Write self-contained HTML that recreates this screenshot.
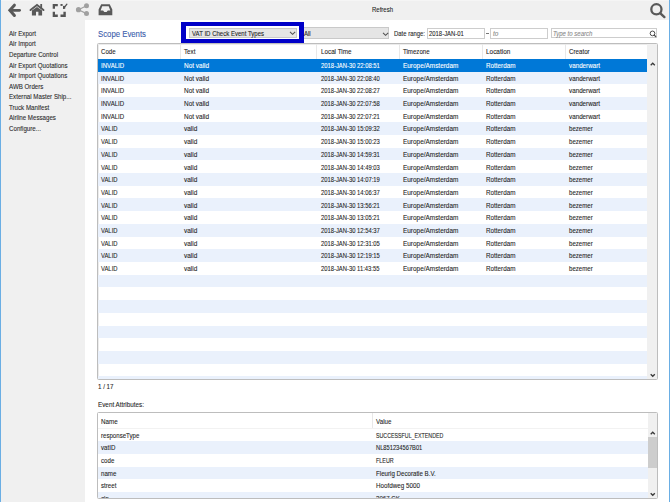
<!DOCTYPE html>
<html><head><meta charset="utf-8"><style>
*{box-sizing:border-box;margin:0;padding:0}
html,body{width:670px;height:502px;overflow:hidden;background:#f0f0f0;font-family:"Liberation Sans",sans-serif;color:#1f1f1f}
.a{position:absolute}
.t{position:absolute;white-space:nowrap;line-height:1.117;transform-origin:0 0;-webkit-text-stroke:0.1px currentColor}
</style></head><body>
<div class="a" style="left:0;top:0;width:1px;height:502px;background:#6aaee4"></div>
<div class="a" style="left:669px;top:0;width:1px;height:502px;background:#6aaee4"></div>
<div class="a" style="left:85px;top:20px;width:584px;height:482px;background:#fff"></div>
<div class="a" style="left:1px;top:0;width:668px;height:1px;background:#f5f5f5"></div>
<svg class="a" style="left:0;top:0" width="670" height="20" viewBox="0 0 670 20">
  <g fill="none" stroke="#595959" stroke-width="3" stroke-linecap="round" stroke-linejoin="miter">
    <path d="M14.4 5.2 L9.85 10.3 L14.4 15.5"/>
    <path d="M11 10.3 H19.6" stroke-width="2.8"/>
  </g>
  <g fill="#595959">
    <path d="M30.5 10.1 L37 4.9 L43.5 10.1" fill="none" stroke="#595959" stroke-width="1.9" stroke-linejoin="miter" stroke-linecap="round"/>
    <rect x="40.3" y="4" width="1.8" height="4.2"/>
    <path d="M31.9 10.6 L37 6.9 L42.1 10.6 V15.5 H38.4 V11.8 H36 V15.5 H31.9 Z"/>
  </g>
  <g fill="#555">
    <path d="M52.7 4 H57.8 V6.2 H55 V8.8 H52.7 Z"/>
    <path d="M52.7 11.8 H55 V14.6 H57.8 V16.9 H52.7 Z"/>
    <path d="M60.5 14.6 H63.4 V11.8 H65.8 V16.9 H60.5 Z"/>
    <path d="M60.5 4 H62.6 V5.9 H60.5 Z"/>
    <path d="M63 5.9 H65.2 V8.8 H63 Z"/>
    <path d="M63.6 8.4 L66.9 4.2" stroke="#555" stroke-width="1.3" stroke-linecap="round"/>
  </g>
  <g fill="#a0a0a0" stroke="#a0a0a0">
    <circle cx="78.5" cy="9.7" r="2.6" stroke="none"/>
    <circle cx="86.5" cy="5.8" r="2.5" stroke="none"/>
    <circle cx="86.5" cy="13.6" r="2.5" stroke="none"/>
    <path d="M78.5 9.7 L86.5 5.8 M78.5 9.7 L86.5 13.6" stroke-width="1.2" fill="none"/>
  </g>
  <g fill="#595959">
    <path d="M101.2 4.3 H109.7 L112.3 9.6 V15.3 H98.6 V9.6 Z M102.2 6.3 L100.6 10.6 H103.1 L104.3 12 H106.6 L107.8 10.6 H110.3 L108.7 6.3 Z" fill-rule="evenodd"/>
  </g>
  <g fill="none" stroke="#595959" stroke-width="2.3">
    <circle cx="656.4" cy="9.3" r="5.1"/>
    <path d="M660.4 13.3 L664.4 17.1" stroke-linecap="round" stroke-width="2.4"/>
  </g>
</svg>

<div class="t" style="left:372.00px;top:6.09px;font-size:7.3px;transform:scaleX(0.821);">Refresh</div>
<div class="t" style="left:9.00px;top:29.89px;font-size:7.3px;transform:scaleX(0.845);color:#2b2b2b;">Air Export</div>
<div class="t" style="left:9.00px;top:40.45px;font-size:7.3px;transform:scaleX(0.845);color:#2b2b2b;">Air Import</div>
<div class="t" style="left:9.00px;top:51.01px;font-size:7.3px;transform:scaleX(0.845);color:#2b2b2b;">Departure Control</div>
<div class="t" style="left:9.00px;top:61.57px;font-size:7.3px;transform:scaleX(0.845);color:#2b2b2b;">Air Export Quotations</div>
<div class="t" style="left:9.00px;top:72.13px;font-size:7.3px;transform:scaleX(0.845);color:#2b2b2b;">Air Import Quotations</div>
<div class="t" style="left:9.00px;top:82.69px;font-size:7.3px;transform:scaleX(0.845);color:#2b2b2b;">AWB Orders</div>
<div class="t" style="left:9.00px;top:93.25px;font-size:7.3px;transform:scaleX(0.845);color:#2b2b2b;">External Master Ship...</div>
<div class="t" style="left:9.00px;top:103.81px;font-size:7.3px;transform:scaleX(0.845);color:#2b2b2b;">Truck Manifest</div>
<div class="t" style="left:9.00px;top:114.37px;font-size:7.3px;transform:scaleX(0.845);color:#2b2b2b;">Airline Messages</div>
<div class="t" style="left:9.00px;top:124.93px;font-size:7.3px;transform:scaleX(0.845);color:#2b2b2b;">Configure...</div>
<div class="t" style="left:97.80px;top:30.44px;font-size:8.8px;transform:scaleX(0.884);color:#3b5cab;">Scope Events</div>
<div class="a" style="left:181px;top:22px;width:122.6px;height:21.3px;background:#0000c8"></div>
<div class="a" style="left:185.6px;top:26.2px;width:113.5px;height:12.6px;background:#fff"></div>
<div class="a" style="left:189.3px;top:27.8px;width:108px;height:10.3px;background:#e5e5e5;border:1px solid #c9c9c9"></div>
<div class="t" style="left:191.60px;top:29.89px;font-size:7.3px;transform:scaleX(0.828);">VAT ID Check Event Types</div>
<svg class="a" style="left:288px;top:29px" width="9" height="8" viewBox="0 0 9 8"><path d="M2 2.8 L4.6 5.3 L7.2 2.8" fill="none" stroke="#505050" stroke-width="1.05"/></svg>
<div class="a" style="left:303.6px;top:27.4px;width:85.7px;height:11.6px;background:#e5e5e5;border:1px solid #c9c9c9;border-left:none"></div>
<div class="t" style="left:303.80px;top:29.99px;font-size:7.3px;transform:scaleX(0.825);">All</div>
<svg class="a" style="left:380.5px;top:29.5px" width="9" height="8" viewBox="0 0 9 8"><path d="M2 2.8 L4.6 5.3 L7.2 2.8" fill="none" stroke="#505050" stroke-width="1.05"/></svg>
<div class="t" style="left:393.60px;top:29.69px;font-size:7.3px;transform:scaleX(0.812);">Date range:</div>
<div class="a" style="left:427.3px;top:27.5px;width:57.3px;height:11.3px;background:#fff;border:1px solid #cdcdcd"></div>
<div class="t" style="left:429.10px;top:29.69px;font-size:7.3px;transform:scaleX(0.811);">2018-JAN-01</div>
<div class="a" style="left:486.2px;top:32.8px;width:2.8px;height:1px;background:#777"></div>
<div class="a" style="left:490.4px;top:27.5px;width:57.3px;height:11.3px;background:#fff;border:1px solid #cdcdcd"></div>
<div class="t" style="left:492.50px;top:29.69px;font-size:7.3px;transform:scaleX(0.887);color:#8a8a8a;font-style:italic;">to</div>
<div class="a" style="left:551.3px;top:27.8px;width:105.6px;height:10.7px;background:#fff;border:1px solid #cdcdcd"></div>
<div class="t" style="left:553.00px;top:29.69px;font-size:7.3px;transform:scaleX(0.825);color:#8a8a8a;font-style:italic;">Type to search</div>
<svg class="a" style="left:648px;top:29px" width="10" height="10" viewBox="0 0 10 10"><circle cx="4.5" cy="4.4" r="2.35" fill="none" stroke="#4a4a4a" stroke-width="1"/><path d="M6.2 6.1 L7.7 7.5" stroke="#4a4a4a" stroke-width="1.2" stroke-linecap="round"/></svg>
<div class="a" style="left:97px;top:43.3px;width:561px;height:336.5px;border:1px solid #bdbdbd;border-radius:1.5px;box-shadow:inset 1px 1px 0 #ececec, inset -1px -1px 0 #ececec;background:#fff"></div>
<div class="a" style="left:180px;top:44.3px;width:1px;height:14.4px;background:#e8e8e8"></div>
<div class="a" style="left:316.4px;top:44.3px;width:1px;height:14.4px;background:#e8e8e8"></div>
<div class="a" style="left:399.1px;top:44.3px;width:1px;height:14.4px;background:#e8e8e8"></div>
<div class="a" style="left:482.2px;top:44.3px;width:1px;height:14.4px;background:#e8e8e8"></div>
<div class="a" style="left:565px;top:44.3px;width:1px;height:14.4px;background:#e8e8e8"></div>
<div class="t" style="left:101.00px;top:47.69px;font-size:7.3px;transform:scaleX(0.836);">Code</div>
<div class="t" style="left:183.50px;top:47.69px;font-size:7.3px;transform:scaleX(0.851);">Text</div>
<div class="t" style="left:320.50px;top:47.69px;font-size:7.3px;transform:scaleX(0.861);">Local Time</div>
<div class="t" style="left:403.20px;top:47.69px;font-size:7.3px;transform:scaleX(0.837);">Timezone</div>
<div class="t" style="left:485.80px;top:47.69px;font-size:7.3px;transform:scaleX(0.880);">Location</div>
<div class="t" style="left:568.60px;top:47.69px;font-size:7.3px;transform:scaleX(0.850);">Creator</div>
<div class="a" style="left:98px;top:58.70px;width:549.2px;height:13.41px;background:#0078d7"></div>
<div class="t" style="left:101.00px;top:61.89px;font-size:7.3px;transform:scaleX(0.833);color:#fff;">INVALID</div>
<div class="t" style="left:183.50px;top:61.89px;font-size:7.3px;transform:scaleX(0.884);color:#fff;">Not valid</div>
<div class="t" style="left:320.50px;top:61.89px;font-size:7.3px;transform:scaleX(0.801);color:#fff;">2018-JAN-30 22:08:51</div>
<div class="t" style="left:403.20px;top:61.89px;font-size:7.3px;transform:scaleX(0.881);color:#fff;">Europe/Amsterdam</div>
<div class="t" style="left:485.80px;top:61.89px;font-size:7.3px;transform:scaleX(0.863);color:#fff;">Rotterdam</div>
<div class="t" style="left:568.60px;top:61.89px;font-size:7.3px;transform:scaleX(0.861);color:#fff;">vanderwart</div>
<div class="a" style="left:98px;top:72.11px;width:549.2px;height:12.01px;background:#eaf1fc"></div>
<div class="t" style="left:101.00px;top:74.60px;font-size:7.3px;transform:scaleX(0.833);">INVALID</div>
<div class="t" style="left:183.50px;top:74.60px;font-size:7.3px;transform:scaleX(0.884);">Not valid</div>
<div class="t" style="left:320.50px;top:74.60px;font-size:7.3px;transform:scaleX(0.801);">2018-JAN-30 22:08:40</div>
<div class="t" style="left:403.20px;top:74.60px;font-size:7.3px;transform:scaleX(0.881);">Europe/Amsterdam</div>
<div class="t" style="left:485.80px;top:74.60px;font-size:7.3px;transform:scaleX(0.863);">Rotterdam</div>
<div class="t" style="left:568.60px;top:74.60px;font-size:7.3px;transform:scaleX(0.861);">vanderwart</div>
<div class="t" style="left:101.00px;top:87.31px;font-size:7.3px;transform:scaleX(0.833);">INVALID</div>
<div class="t" style="left:183.50px;top:87.31px;font-size:7.3px;transform:scaleX(0.884);">Not valid</div>
<div class="t" style="left:320.50px;top:87.31px;font-size:7.3px;transform:scaleX(0.801);">2018-JAN-30 22:08:27</div>
<div class="t" style="left:403.20px;top:87.31px;font-size:7.3px;transform:scaleX(0.881);">Europe/Amsterdam</div>
<div class="t" style="left:485.80px;top:87.31px;font-size:7.3px;transform:scaleX(0.863);">Rotterdam</div>
<div class="t" style="left:568.60px;top:87.31px;font-size:7.3px;transform:scaleX(0.861);">vanderwart</div>
<div class="a" style="left:98px;top:96.82px;width:549.2px;height:12.71px;background:#eaf1fc"></div>
<div class="t" style="left:101.00px;top:100.01px;font-size:7.3px;transform:scaleX(0.833);">INVALID</div>
<div class="t" style="left:183.50px;top:100.01px;font-size:7.3px;transform:scaleX(0.884);">Not valid</div>
<div class="t" style="left:320.50px;top:100.01px;font-size:7.3px;transform:scaleX(0.801);">2018-JAN-30 22:07:58</div>
<div class="t" style="left:403.20px;top:100.01px;font-size:7.3px;transform:scaleX(0.881);">Europe/Amsterdam</div>
<div class="t" style="left:485.80px;top:100.01px;font-size:7.3px;transform:scaleX(0.863);">Rotterdam</div>
<div class="t" style="left:568.60px;top:100.01px;font-size:7.3px;transform:scaleX(0.861);">vanderwart</div>
<div class="t" style="left:101.00px;top:112.72px;font-size:7.3px;transform:scaleX(0.833);">INVALID</div>
<div class="t" style="left:183.50px;top:112.72px;font-size:7.3px;transform:scaleX(0.884);">Not valid</div>
<div class="t" style="left:320.50px;top:112.72px;font-size:7.3px;transform:scaleX(0.801);">2018-JAN-30 22:07:21</div>
<div class="t" style="left:403.20px;top:112.72px;font-size:7.3px;transform:scaleX(0.881);">Europe/Amsterdam</div>
<div class="t" style="left:485.80px;top:112.72px;font-size:7.3px;transform:scaleX(0.863);">Rotterdam</div>
<div class="t" style="left:568.60px;top:112.72px;font-size:7.3px;transform:scaleX(0.861);">vanderwart</div>
<div class="a" style="left:98px;top:122.23px;width:549.2px;height:12.71px;background:#eaf1fc"></div>
<div class="t" style="left:101.00px;top:125.42px;font-size:7.3px;transform:scaleX(0.802);">VALID</div>
<div class="t" style="left:183.50px;top:125.42px;font-size:7.3px;transform:scaleX(0.885);">valid</div>
<div class="t" style="left:320.50px;top:125.42px;font-size:7.3px;transform:scaleX(0.801);">2018-JAN-30 15:09:32</div>
<div class="t" style="left:403.20px;top:125.42px;font-size:7.3px;transform:scaleX(0.881);">Europe/Amsterdam</div>
<div class="t" style="left:485.80px;top:125.42px;font-size:7.3px;transform:scaleX(0.863);">Rotterdam</div>
<div class="t" style="left:568.60px;top:125.42px;font-size:7.3px;transform:scaleX(0.834);">bezemer</div>
<div class="t" style="left:101.00px;top:138.13px;font-size:7.3px;transform:scaleX(0.802);">VALID</div>
<div class="t" style="left:183.50px;top:138.13px;font-size:7.3px;transform:scaleX(0.885);">valid</div>
<div class="t" style="left:320.50px;top:138.13px;font-size:7.3px;transform:scaleX(0.801);">2018-JAN-30 15:00:23</div>
<div class="t" style="left:403.20px;top:138.13px;font-size:7.3px;transform:scaleX(0.881);">Europe/Amsterdam</div>
<div class="t" style="left:485.80px;top:138.13px;font-size:7.3px;transform:scaleX(0.863);">Rotterdam</div>
<div class="t" style="left:568.60px;top:138.13px;font-size:7.3px;transform:scaleX(0.834);">bezemer</div>
<div class="a" style="left:98px;top:147.64px;width:549.2px;height:12.71px;background:#eaf1fc"></div>
<div class="t" style="left:101.00px;top:150.84px;font-size:7.3px;transform:scaleX(0.802);">VALID</div>
<div class="t" style="left:183.50px;top:150.84px;font-size:7.3px;transform:scaleX(0.885);">valid</div>
<div class="t" style="left:320.50px;top:150.84px;font-size:7.3px;transform:scaleX(0.801);">2018-JAN-30 14:59:31</div>
<div class="t" style="left:403.20px;top:150.84px;font-size:7.3px;transform:scaleX(0.881);">Europe/Amsterdam</div>
<div class="t" style="left:485.80px;top:150.84px;font-size:7.3px;transform:scaleX(0.863);">Rotterdam</div>
<div class="t" style="left:568.60px;top:150.84px;font-size:7.3px;transform:scaleX(0.834);">bezemer</div>
<div class="t" style="left:101.00px;top:163.54px;font-size:7.3px;transform:scaleX(0.802);">VALID</div>
<div class="t" style="left:183.50px;top:163.54px;font-size:7.3px;transform:scaleX(0.885);">valid</div>
<div class="t" style="left:320.50px;top:163.54px;font-size:7.3px;transform:scaleX(0.801);">2018-JAN-30 14:49:03</div>
<div class="t" style="left:403.20px;top:163.54px;font-size:7.3px;transform:scaleX(0.881);">Europe/Amsterdam</div>
<div class="t" style="left:485.80px;top:163.54px;font-size:7.3px;transform:scaleX(0.863);">Rotterdam</div>
<div class="t" style="left:568.60px;top:163.54px;font-size:7.3px;transform:scaleX(0.834);">bezemer</div>
<div class="a" style="left:98px;top:173.05px;width:549.2px;height:12.71px;background:#eaf1fc"></div>
<div class="t" style="left:101.00px;top:176.25px;font-size:7.3px;transform:scaleX(0.802);">VALID</div>
<div class="t" style="left:183.50px;top:176.25px;font-size:7.3px;transform:scaleX(0.885);">valid</div>
<div class="t" style="left:320.50px;top:176.25px;font-size:7.3px;transform:scaleX(0.801);">2018-JAN-30 14:07:19</div>
<div class="t" style="left:403.20px;top:176.25px;font-size:7.3px;transform:scaleX(0.881);">Europe/Amsterdam</div>
<div class="t" style="left:485.80px;top:176.25px;font-size:7.3px;transform:scaleX(0.863);">Rotterdam</div>
<div class="t" style="left:568.60px;top:176.25px;font-size:7.3px;transform:scaleX(0.834);">bezemer</div>
<div class="t" style="left:101.00px;top:188.95px;font-size:7.3px;transform:scaleX(0.802);">VALID</div>
<div class="t" style="left:183.50px;top:188.95px;font-size:7.3px;transform:scaleX(0.885);">valid</div>
<div class="t" style="left:320.50px;top:188.95px;font-size:7.3px;transform:scaleX(0.801);">2018-JAN-30 14:06:37</div>
<div class="t" style="left:403.20px;top:188.95px;font-size:7.3px;transform:scaleX(0.881);">Europe/Amsterdam</div>
<div class="t" style="left:485.80px;top:188.95px;font-size:7.3px;transform:scaleX(0.863);">Rotterdam</div>
<div class="t" style="left:568.60px;top:188.95px;font-size:7.3px;transform:scaleX(0.834);">bezemer</div>
<div class="a" style="left:98px;top:198.47px;width:549.2px;height:12.71px;background:#eaf1fc"></div>
<div class="t" style="left:101.00px;top:201.66px;font-size:7.3px;transform:scaleX(0.802);">VALID</div>
<div class="t" style="left:183.50px;top:201.66px;font-size:7.3px;transform:scaleX(0.885);">valid</div>
<div class="t" style="left:320.50px;top:201.66px;font-size:7.3px;transform:scaleX(0.801);">2018-JAN-30 13:56:21</div>
<div class="t" style="left:403.20px;top:201.66px;font-size:7.3px;transform:scaleX(0.881);">Europe/Amsterdam</div>
<div class="t" style="left:485.80px;top:201.66px;font-size:7.3px;transform:scaleX(0.863);">Rotterdam</div>
<div class="t" style="left:568.60px;top:201.66px;font-size:7.3px;transform:scaleX(0.834);">bezemer</div>
<div class="t" style="left:101.00px;top:214.37px;font-size:7.3px;transform:scaleX(0.802);">VALID</div>
<div class="t" style="left:183.50px;top:214.37px;font-size:7.3px;transform:scaleX(0.885);">valid</div>
<div class="t" style="left:320.50px;top:214.37px;font-size:7.3px;transform:scaleX(0.801);">2018-JAN-30 13:05:21</div>
<div class="t" style="left:403.20px;top:214.37px;font-size:7.3px;transform:scaleX(0.881);">Europe/Amsterdam</div>
<div class="t" style="left:485.80px;top:214.37px;font-size:7.3px;transform:scaleX(0.863);">Rotterdam</div>
<div class="t" style="left:568.60px;top:214.37px;font-size:7.3px;transform:scaleX(0.834);">bezemer</div>
<div class="a" style="left:98px;top:223.88px;width:549.2px;height:12.71px;background:#eaf1fc"></div>
<div class="t" style="left:101.00px;top:227.07px;font-size:7.3px;transform:scaleX(0.802);">VALID</div>
<div class="t" style="left:183.50px;top:227.07px;font-size:7.3px;transform:scaleX(0.885);">valid</div>
<div class="t" style="left:320.50px;top:227.07px;font-size:7.3px;transform:scaleX(0.801);">2018-JAN-30 12:54:37</div>
<div class="t" style="left:403.20px;top:227.07px;font-size:7.3px;transform:scaleX(0.881);">Europe/Amsterdam</div>
<div class="t" style="left:485.80px;top:227.07px;font-size:7.3px;transform:scaleX(0.863);">Rotterdam</div>
<div class="t" style="left:568.60px;top:227.07px;font-size:7.3px;transform:scaleX(0.834);">bezemer</div>
<div class="t" style="left:101.00px;top:239.78px;font-size:7.3px;transform:scaleX(0.802);">VALID</div>
<div class="t" style="left:183.50px;top:239.78px;font-size:7.3px;transform:scaleX(0.885);">valid</div>
<div class="t" style="left:320.50px;top:239.78px;font-size:7.3px;transform:scaleX(0.801);">2018-JAN-30 12:31:05</div>
<div class="t" style="left:403.20px;top:239.78px;font-size:7.3px;transform:scaleX(0.881);">Europe/Amsterdam</div>
<div class="t" style="left:485.80px;top:239.78px;font-size:7.3px;transform:scaleX(0.863);">Rotterdam</div>
<div class="t" style="left:568.60px;top:239.78px;font-size:7.3px;transform:scaleX(0.834);">bezemer</div>
<div class="a" style="left:98px;top:249.29px;width:549.2px;height:12.71px;background:#eaf1fc"></div>
<div class="t" style="left:101.00px;top:252.48px;font-size:7.3px;transform:scaleX(0.802);">VALID</div>
<div class="t" style="left:183.50px;top:252.48px;font-size:7.3px;transform:scaleX(0.885);">valid</div>
<div class="t" style="left:320.50px;top:252.48px;font-size:7.3px;transform:scaleX(0.801);">2018-JAN-30 12:19:15</div>
<div class="t" style="left:403.20px;top:252.48px;font-size:7.3px;transform:scaleX(0.881);">Europe/Amsterdam</div>
<div class="t" style="left:485.80px;top:252.48px;font-size:7.3px;transform:scaleX(0.863);">Rotterdam</div>
<div class="t" style="left:568.60px;top:252.48px;font-size:7.3px;transform:scaleX(0.834);">bezemer</div>
<div class="t" style="left:101.00px;top:265.19px;font-size:7.3px;transform:scaleX(0.802);">VALID</div>
<div class="t" style="left:183.50px;top:265.19px;font-size:7.3px;transform:scaleX(0.885);">valid</div>
<div class="t" style="left:320.50px;top:265.19px;font-size:7.3px;transform:scaleX(0.801);">2018-JAN-30 11:43:55</div>
<div class="t" style="left:403.20px;top:265.19px;font-size:7.3px;transform:scaleX(0.881);">Europe/Amsterdam</div>
<div class="t" style="left:485.80px;top:265.19px;font-size:7.3px;transform:scaleX(0.863);">Rotterdam</div>
<div class="t" style="left:568.60px;top:265.19px;font-size:7.3px;transform:scaleX(0.834);">bezemer</div>
<div class="a" style="left:98px;top:274.70px;width:549.2px;height:12.71px;background:#eaf1fc"></div>
<div class="a" style="left:98px;top:300.11px;width:549.2px;height:12.71px;background:#eaf1fc"></div>
<div class="a" style="left:98px;top:325.53px;width:549.2px;height:12.71px;background:#eaf1fc"></div>
<div class="a" style="left:98px;top:350.94px;width:549.2px;height:12.71px;background:#eaf1fc"></div>
<div class="a" style="left:98px;top:376.35px;width:549.2px;height:2.65px;background:#eaf1fc"></div>
<div class="a" style="left:647.2px;top:44.3px;width:9.8px;height:334.7px;background:#f0f0f0"></div>
<svg class="a" style="left:647.5px;top:60px" width="10" height="8" viewBox="0 0 10 8"><path d="M2.7 5.3 L4.75 3.2 L6.8 5.3" fill="none" stroke="#3a3a3a" stroke-width="1.3"/></svg>
<svg class="a" style="left:647.5px;top:371px" width="10" height="8" viewBox="0 0 10 8"><path d="M2.7 3.2 L4.75 5.3 L6.8 3.2" fill="none" stroke="#3a3a3a" stroke-width="1.3"/></svg>
<div class="t" style="left:97.70px;top:382.69px;font-size:7.3px;transform:scaleX(0.848);">1 / 17</div>
<div class="t" style="left:97.70px;top:400.99px;font-size:7.3px;transform:scaleX(0.865);">Event Attributes:</div>
<div class="a" style="left:97px;top:412.3px;width:561px;height:86.5px;border:1px solid #bdbdbd;border-radius:1.5px;background:#fff;overflow:hidden">
<div class="a" style="left:274px;top:0;width:1px;height:15px;background:#e8e8e8"></div>
<div class="a" style="left:0;top:14.300000000000011px;width:550px;height:1px;background:#f2f2f2"></div>
<div class="t" style="left:3.00px;top:4.59px;font-size:7.3px;transform:scaleX(0.857);">Name</div>
<div class="t" style="left:277.60px;top:4.59px;font-size:7.3px;transform:scaleX(0.850);">Value</div>
<div class="t" style="left:3.00px;top:18.29px;font-size:7.3px;transform:scaleX(0.835);">responseType</div>
<div class="t" style="left:278.40px;top:18.29px;font-size:7.3px;transform:scaleX(0.725);">SUCCESSFUL_EXTENDED</div>
<div class="a" style="left:0;top:27.81px;width:550px;height:12.706px;background:#eaf1fc"></div>
<div class="t" style="left:3.00px;top:31.00px;font-size:7.3px;transform:scaleX(0.840);">vatID</div>
<div class="t" style="left:278.40px;top:31.00px;font-size:7.3px;transform:scaleX(0.787);">NL851234567B01</div>
<div class="t" style="left:3.00px;top:43.71px;font-size:7.3px;transform:scaleX(0.840);">code</div>
<div class="t" style="left:278.40px;top:43.71px;font-size:7.3px;transform:scaleX(0.739);">FLEUR</div>
<div class="a" style="left:0;top:53.22px;width:550px;height:12.706px;background:#eaf1fc"></div>
<div class="t" style="left:3.00px;top:56.41px;font-size:7.3px;transform:scaleX(0.840);">name</div>
<div class="t" style="left:278.40px;top:56.41px;font-size:7.3px;transform:scaleX(0.844);">Fleurig Decoratie B.V.</div>
<div class="t" style="left:3.00px;top:69.12px;font-size:7.3px;transform:scaleX(0.840);">street</div>
<div class="t" style="left:278.40px;top:69.12px;font-size:7.3px;transform:scaleX(0.858);">Hoofdweg 5000</div>
<div class="a" style="left:0;top:78.63px;width:550px;height:12.706px;background:#eaf1fc"></div>
<div class="t" style="left:3.00px;top:81.82px;font-size:7.3px;transform:scaleX(0.840);">zip</div>
<div class="t" style="left:278.40px;top:81.82px;font-size:7.3px;transform:scaleX(0.840);">3067 CK</div>
<div class="a" style="left:549.8px;top:0;width:9.5px;height:90px;background:#f0f0f0"></div>
<div class="a" style="left:549.8px;top:24.19999999999999px;width:9px;height:30.3px;background:#cdcdcd"></div>
<svg class="a" style="left:549.5px;top:15.699999999999989px" width="10" height="8" viewBox="0 0 10 8"><path d="M2.7 5.3 L4.75 3.2 L6.8 5.3" fill="none" stroke="#3a3a3a" stroke-width="1.3"/></svg>
<svg class="a" style="left:549.5px;top:76.69999999999999px" width="10" height="8" viewBox="0 0 10 8"><path d="M2.7 3.2 L4.75 5.3 L6.8 3.2" fill="none" stroke="#3a3a3a" stroke-width="1.3"/></svg>
</div>
</body></html>
